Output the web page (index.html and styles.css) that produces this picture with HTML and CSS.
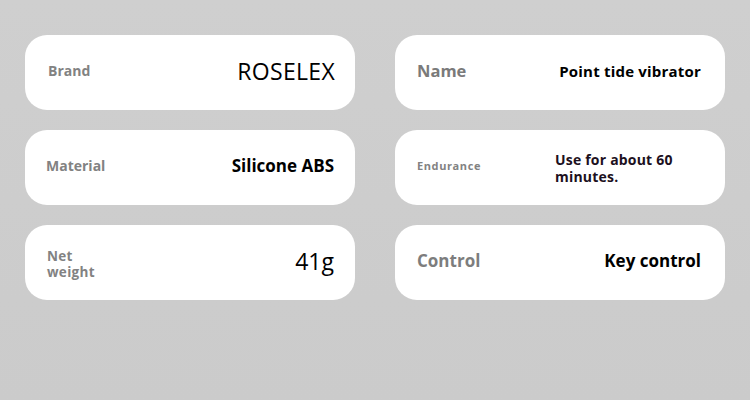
FILE: index.html
```html
<!DOCTYPE html>
<html>
<head>
<meta charset="utf-8">
<link rel="stylesheet" href="styles.css">
</head>
<body>
<div class="grid">
  <div class="card">
    <span class="label l-brand">Brand</span>
    <span class="value v-brand">ROSELEX</span>
  </div>
  <div class="card">
    <span class="label l-name">Name</span>
    <span class="value v-name">Point tide vibrator</span>
  </div>
  <div class="card">
    <span class="label l-material">Material</span>
    <span class="value v-material">Silicone ABS</span>
  </div>
  <div class="card">
    <span class="label l-endurance">Endurance</span>
    <span class="value v-endurance">Use for about 60 minutes.</span>
  </div>
  <div class="card">
    <span class="label l-weight">Net weight</span>
    <span class="value v-weight">41g</span>
  </div>
  <div class="card">
    <span class="label l-control">Control</span>
    <span class="value v-control">Key control</span>
  </div>
</div>
</body>
</html>
```
FILE: styles.css
```css
html, body {
  margin: 0;
  padding: 0;
}
body {
  width: 750px;
  height: 400px;
  background: linear-gradient(180deg, #cfcfcf 0%, #cbcbcb 100%);
  font-family: "Open Sans", "Noto Sans", sans-serif;
  overflow: hidden;
}
.grid {
  display: grid;
  grid-template-columns: 330px 330px;
  grid-auto-rows: 75px;
  column-gap: 40px;
  row-gap: 20px;
  padding: 35px 25px 0 25px;
}
.card {
  background: #fff;
  border-radius: 22px;
  display: flex;
  align-items: center;
  justify-content: space-between;
  padding: 0 20px 4px 22px;
}
.label {
  color: #828282;
  font-weight: 700;
  font-size: 14px;
}
.value {
  color: #000;
  font-weight: 700;
}
.l-brand { font-size: 14px; margin-left: 1px; }
.v-brand { font-weight: 400; font-size: 23px; letter-spacing: 0.3px; }
.l-name { font-size: 16.5px; color: #7a7a7a; }
.v-name { font-size: 15px; margin-right: 4px; letter-spacing: 0.2px; }
.l-material { font-size: 14px; margin-left: -1px; }
.v-material { font-size: 17px; margin-right: 1px; }
.l-endurance { font-size: 11px; letter-spacing: 0.6px; }
.v-endurance {
  font-size: 14px;
  line-height: 17px;
  width: 150px;
  color: #1c1020;
  letter-spacing: 0.2px;
  margin-top: 4px;
}
.l-weight {
  font-size: 13.5px;
  line-height: 16px;
  width: 56px;
  letter-spacing: 0.3px;
  margin-top: 6px;
}
.v-weight { font-weight: 400; font-size: 23px; margin-right: 1px; }
.l-control { font-size: 17px; color: #7d7d7d; }
.v-control { font-size: 17px; margin-right: 4px; }
```
